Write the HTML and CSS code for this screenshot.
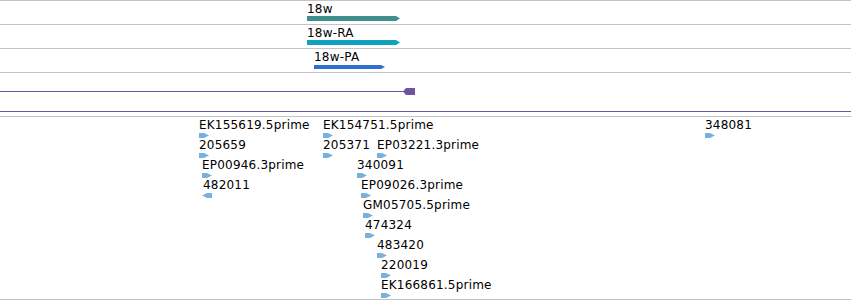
FILE: index.html
```html
<!DOCTYPE html>
<html lang="en">
<head>
  <meta charset="UTF-8">
  <title>Track view</title>
  <link rel="stylesheet" href="styles.css">
</head>
<body>

<div class="view">
  <div class="track">
    <div class="feature" style="left:307px">
      <div class="label">18w</div>
      <div class="bar bar-gene" style="width:93px"></div>
    </div>
  </div>

  <div class="track">
    <div class="feature" style="left:307px">
      <div class="label">18w-RA</div>
      <div class="bar bar-mrna" style="width:93px"></div>
    </div>
  </div>

  <div class="track">
    <div class="feature" style="left:314px">
      <div class="label">18w-PA</div>
      <div class="bar bar-cds" style="width:71px"></div>
    </div>
  </div>

  <div class="track track-tall">
    <div class="span-line" style="width:404px"></div>
    <div class="span-end" style="left:403px"></div>
  </div>

  <div class="track track-reads">
    <div class="read" style="left:199px;top:1px"><div class="label">EK155619.5prime</div><svg class="arrow" width="10" height="5"><polygon points="0,0 5,0 10,2.5 5,5 0,5"/></svg></div>
    <div class="read" style="left:323px;top:1px"><div class="label">EK154751.5prime</div><svg class="arrow" width="10" height="5"><polygon points="0,0 5,0 10,2.5 5,5 0,5"/></svg></div>
    <div class="read" style="left:705px;top:1px"><div class="label">348081</div><svg class="arrow" width="10" height="5"><polygon points="0,0 5,0 10,2.5 5,5 0,5"/></svg></div>

    <div class="read" style="left:199px;top:21px"><div class="label">205659</div><svg class="arrow" width="10" height="5"><polygon points="0,0 5,0 10,2.5 5,5 0,5"/></svg></div>
    <div class="read" style="left:323px;top:21px"><div class="label">205371</div><svg class="arrow" width="10" height="5"><polygon points="0,0 5,0 10,2.5 5,5 0,5"/></svg></div>
    <div class="read" style="left:377px;top:21px"><div class="label">EP03221.3prime</div><svg class="arrow" width="10" height="5"><polygon points="0,0 5,0 10,2.5 5,5 0,5"/></svg></div>

    <div class="read" style="left:202px;top:41px"><div class="label">EP00946.3prime</div><svg class="arrow" width="10" height="5"><polygon points="0,0 5,0 10,2.5 5,5 0,5"/></svg></div>
    <div class="read" style="left:357px;top:41px"><div class="label">340091</div><svg class="arrow" width="10" height="5"><polygon points="0,0 5,0 10,2.5 5,5 0,5"/></svg></div>

    <div class="read" style="left:202px;top:61px"><div class="label label-in">482011</div><svg class="arrow" width="10" height="5"><polygon points="10,0 5,0 0,2.5 5,5 10,5"/></svg></div>
    <div class="read" style="left:361px;top:61px"><div class="label">EP09026.3prime</div><svg class="arrow" width="10" height="5"><polygon points="0,0 5,0 10,2.5 5,5 0,5"/></svg></div>

    <div class="read" style="left:363px;top:81px"><div class="label">GM05705.5prime</div><svg class="arrow" width="10" height="5"><polygon points="0,0 5,0 10,2.5 5,5 0,5"/></svg></div>
    <div class="read" style="left:365px;top:101px"><div class="label">474324</div><svg class="arrow" width="10" height="5"><polygon points="0,0 5,0 10,2.5 5,5 0,5"/></svg></div>
    <div class="read" style="left:377px;top:121px"><div class="label">483420</div><svg class="arrow" width="10" height="5"><polygon points="0,0 5,0 10,2.5 5,5 0,5"/></svg></div>
    <div class="read" style="left:381px;top:141px"><div class="label">220019</div><svg class="arrow" width="10" height="5"><polygon points="0,0 5,0 10,2.5 5,5 0,5"/></svg></div>
    <div class="read" style="left:381px;top:161px"><div class="label">EK166861.5prime</div><svg class="arrow" width="10" height="5"><polygon points="0,0 5,0 10,2.5 5,5 0,5"/></svg></div>
  </div>
</div>

</body>
</html>
```

FILE: styles.css
```css
:root {
  --grid-line: #c4c4c4;
  --gene: #3f8f8f;
  --mrna: #10a0c0;
  --cds: #3070cc;
  --purple: #7052a0;
  --read: #7ab0dc;
}

body {
  margin: 0;
  font-family: "DejaVu Sans", Verdana, sans-serif;
  font-size: 12px;
  color: #000;
  background: white;
}

.view {
  width: 851px;
  height: 300px;
  overflow: hidden;
}

.track {
  position: relative;
  height: 23px;
  border-top: 1px solid var(--grid-line);
}

.feature,
.read {
  position: absolute;
  top: 1px;
}

.label {
  line-height: 14px;
  letter-spacing: 0.2px;
  white-space: nowrap;
}

.bar {
  height: 5px;
  clip-path: polygon(0 0, calc(100% - 4px) 0, 100% 50%, calc(100% - 4px) 100%, 0 100%);
}

.bar-gene { background: var(--gene); }
.bar-mrna { background: var(--mrna); }
.bar-cds {
  background: var(--cds);
  height: 4px;
  margin-top: 1px;
}

.track-tall {
  height: 38px;
  border-bottom: 1px solid var(--purple);
  margin-bottom: 4px;
}

.span-line {
  position: absolute;
  left: 0;
  top: 18px;
  height: 1px;
  background: var(--purple);
}

.span-end {
  position: absolute;
  top: 15px;
  width: 12px;
  height: 7px;
  background: var(--purple);
  clip-path: polygon(0 50%, 3px 0, 100% 0, 100% 100%, 3px 100%);
}

.track-reads {
  height: 182px;
  border-bottom: 1px solid var(--grid-line);
}

.label-in {
  margin-left: 1px;
}

.arrow {
  display: block;
  margin-top: 1px;
  fill: var(--read);
}
```
